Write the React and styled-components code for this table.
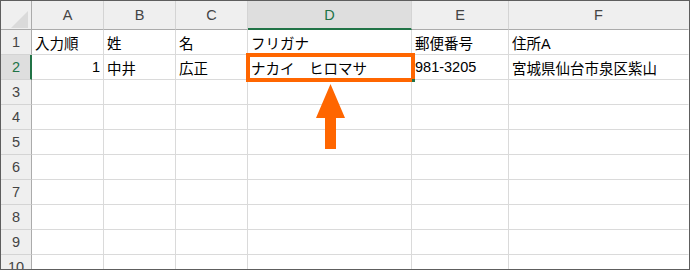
import React from "react";
import styled, { createGlobalStyle } from "styled-components";

const Global = createGlobalStyle`
  html, body { margin: 0; padding: 0; background: #fff; }
  body { font-family: "Liberation Sans", "Noto Sans CJK JP", sans-serif; }
`;

const Frame = styled.div`
  position: relative;
  width: 690px;
  height: 270px;
  box-sizing: border-box;
  border: 1px solid #5e5e5e;
  overflow: hidden;
  background: #fff;
`;

const Grid = styled.div`
  display: grid;
  grid-template-columns: 31px 72px 72px 72px 164px 97px 180px;
  grid-template-rows: 29px repeat(10, 25px);
`;

const Corner = styled.div`
  grid-row: 1;
  grid-column: 1;
  display: flex;
  align-items: flex-end;
  justify-content: flex-end;
  padding: 0 3px 1px 0;
  background: #efefef;
  box-sizing: border-box;
  border-right: 1px solid #ababab;
  border-bottom: 1px solid #ababab;
`;

const ColHead = styled.div`
  grid-row: 1;
  grid-column: ${(p) => p.$c};
  box-sizing: border-box;
  background: ${(p) => (p.$sel ? "#dedede" : "#efefef")};
  color: ${(p) => (p.$sel ? "#217346" : "#444")};
  border-right: 1px solid ${(p) => (p.$last ? "#efefef" : "#d4d4d4")};
  border-bottom: ${(p) => (p.$sel ? "2px solid #217346" : "1px solid #ababab")};
  display: flex;
  align-items: center;
  justify-content: center;
  font-size: 14.5px;
  padding-top: ${(p) => (p.$sel ? "1px" : "0")};
`;

const RowHead = styled.div`
  grid-row: ${(p) => p.$r};
  grid-column: 1;
  box-sizing: border-box;
  background: ${(p) => (p.$sel ? "#dedede" : "#efefef")};
  color: ${(p) => (p.$sel ? "#217346" : "#444")};
  border-right: ${(p) => (p.$sel ? "2px solid #217346" : "1px solid #ababab")};
  border-bottom: 1px solid #d4d4d4;
  display: flex;
  align-items: center;
  justify-content: center;
  font-size: 14.5px;
  padding-left: ${(p) => (p.$sel ? "1px" : "0")};
`;

const Cell = styled.div`
  grid-row: ${(p) => p.$r};
  grid-column: ${(p) => p.$c};
  box-sizing: border-box;
  border-right: 1px solid ${(p) => (p.$last ? "#fff" : "#dadada")};
  border-bottom: 1px solid #dadada;
  display: flex;
  align-items: center;
  justify-content: ${(p) => (p.$num ? "flex-end" : "flex-start")};
  padding: 0 3px 0 3px;
  font-size: 14.5px;
  color: #000;
  white-space: pre;
  overflow: visible;
`;

const ArrowSlot = styled.div`
  grid-column: 5;
  grid-row: 4 / 7;
  display: flex;
  justify-content: center;
  align-items: flex-start;
  padding: 4px 0 0 2px;
  z-index: 1;
`;

const Highlight = styled.div`
  position: absolute;
  left: 245px;
  top: 52px;
  width: 169px;
  height: 29px;
  box-sizing: border-box;
  border: 4px solid #ff6600;
`;

const Handle = styled.div`
  position: absolute;
  left: 411px;
  top: 78px;
  width: 3px;
  height: 3px;
  background: #217346;
`;

const cols = ["A", "B", "C", "D", "E", "F"];
const data = {
  1: ["入力順", "姓", "名", "フリガナ", "郵便番号", "住所A"],
  2: ["1", "中井", "広正", "ナカイ　ヒロマサ", "981-3205", "宮城県仙台市泉区紫山"],
};

export default function App() {
  const rows = Array.from({ length: 10 }, (_, i) => i + 1);
  return (
    <>
      <Global />
      <Frame>
        <Grid>
          <Corner>
            <svg width="17" height="17" viewBox="0 0 17 17">
              <polygon points="17,0 17,17 0,17" fill="#dadada" />
            </svg>
          </Corner>
          {cols.map((c, i) => (
            <ColHead key={c} $c={i + 2} $sel={c === "D"} $last={i === cols.length - 1}>
              {c}
            </ColHead>
          ))}
          {rows.map((r) => (
            <React.Fragment key={r}>
              <RowHead $r={r + 1} $sel={r === 2}>{r}</RowHead>
              {cols.map((c, i) => {
                const v = data[r] ? data[r][i] : "";
                return (
                  <Cell
                    key={c}
                    $r={r + 1}
                    $c={i + 2}
                    $num={r === 2 && i === 0}
                    $last={i === cols.length - 1}
                  >
                    {v}
                  </Cell>
                );
              })}
            </React.Fragment>
          ))}
          <ArrowSlot>
            <svg width="30" height="66" viewBox="0 0 30 66">
              <polygon points="14.5,0 29,34 20,34 20,65 9,65 9,34 0,34" fill="#ff6600" />
            </svg>
          </ArrowSlot>
        </Grid>
        <Highlight />
        <Handle />
      </Frame>
    </>
  );
}
